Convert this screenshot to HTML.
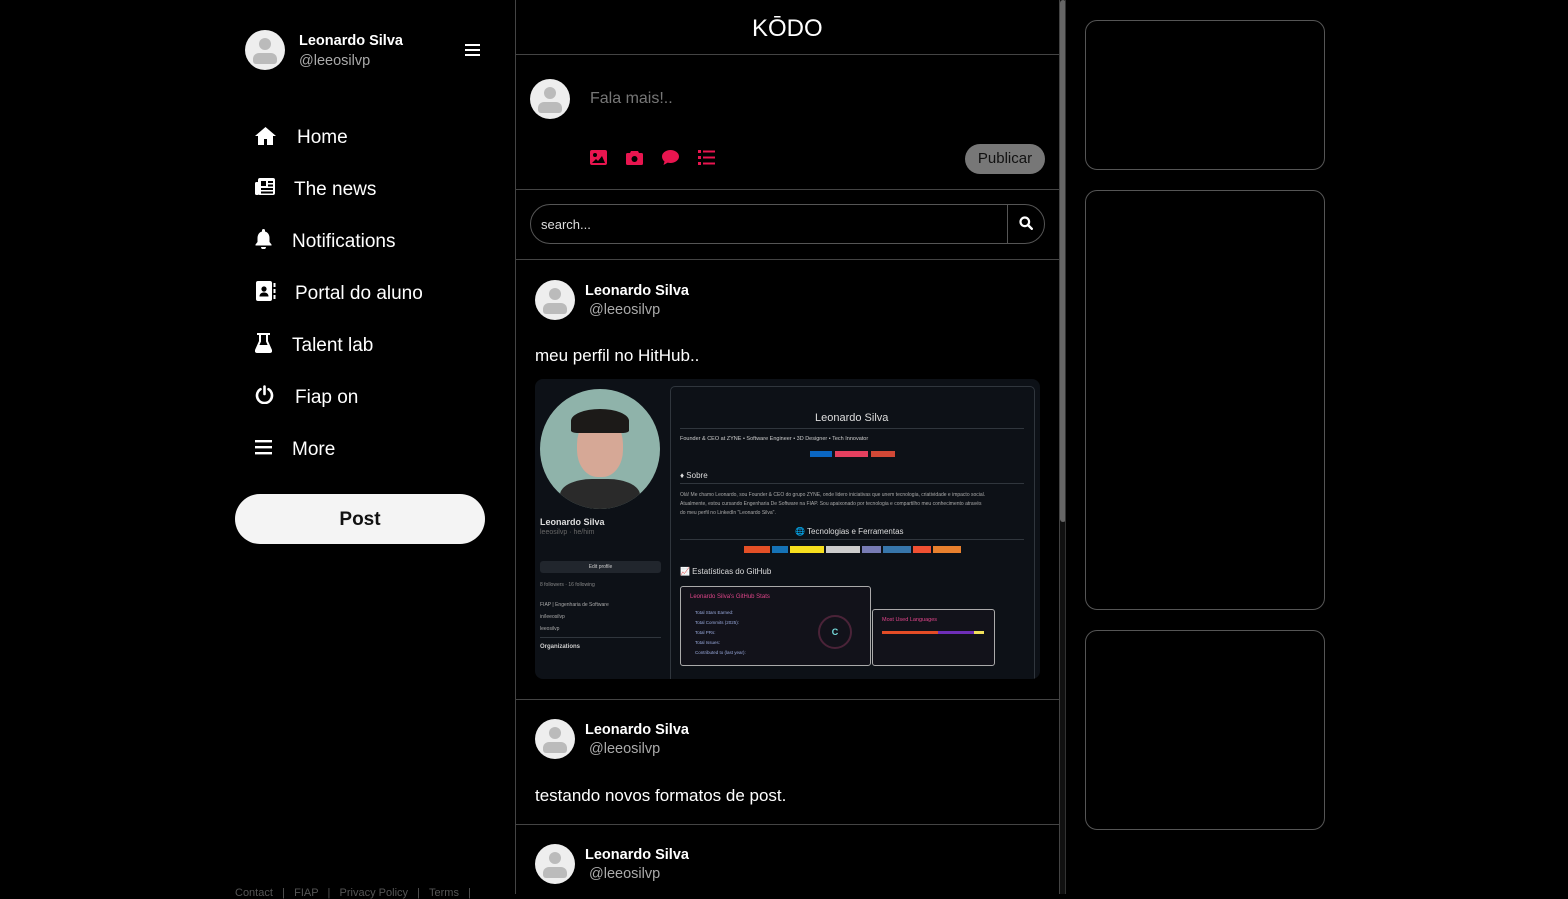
<!DOCTYPE html>
<html><head><meta charset="utf-8"><style>
*{box-sizing:border-box;margin:0;padding:0}
body{width:1568px;height:894px;background:#000;color:#fff;font-family:"Liberation Sans",sans-serif;position:relative;overflow:hidden}
.a{position:absolute}
.av{position:absolute;width:40px;height:40px;border-radius:50%;background:#eee;overflow:hidden}
.av:before{content:"";position:absolute;left:14px;top:8px;width:12px;height:12px;border-radius:50%;background:#bbb}
.av:after{content:"";position:absolute;left:8px;top:23px;width:24px;height:11px;border-radius:6px 6px 3px 3px;background:#bbb}
.hl{position:absolute;left:516px;width:543px;height:1px;background:#444}
.nm{font-weight:bold;font-size:14.5px}
.hd{font-size:14.5px;color:#aaa}
.card{position:absolute;left:1085px;width:240px;border:1px solid #555;border-radius:12px}
.pk{position:absolute;fill:#e8154f}
.t{position:absolute;white-space:nowrap}
</style></head><body>
<div class="av" style="left:245px;top:30px"></div>
<div class="t nm" style="left:299px;top:33px">Leonardo Silva</div>
<div class="t hd" style="left:299px;top:53px">@leeosilvp</div>
<svg class="a" style="left:465px;top:43px" width="15" height="14"><rect y="1" width="15" height="2" fill="#fff"/><rect y="6" width="15" height="2" fill="#fff"/><rect y="11" width="15" height="2" fill="#fff"/></svg>

<svg class="a" style="left:254px;top:126px" width="23" height="20" viewBox="0 0 23 20"><path d="M11.5 1L1 10h3v9h6v-6h3v6h6v-9h3z" fill="#fff"/></svg>
<div class="t" style="left:297px;top:127px;font-size:19px">Home</div>
<svg class="a" style="left:255px;top:178px" width="20" height="18" viewBox="0 0 20 18"><rect x="3" y="0" width="17" height="17" rx="2" fill="#fff"/><rect x="0" y="4" width="4" height="13" rx="1.5" fill="#fff"/><rect x="6" y="3" width="5" height="5" fill="#000"/><rect x="13" y="3" width="5" height="2" fill="#000"/><rect x="13" y="6.5" width="5" height="2" fill="#000"/><rect x="6" y="10" width="12" height="2" fill="#000"/><rect x="6" y="13.5" width="12" height="2" fill="#000"/></svg>
<div class="t" style="left:294px;top:179px;font-size:19px">The news</div>
<svg class="a" style="left:255px;top:229px" width="17" height="20" viewBox="0 0 17 20"><path d="M8.5 0a1.5 1.5 0 0 1 1.5 1.5v1C13 3.3 14.5 6 14.5 9v4l2 2.5v1H.5v-1l2-2.5V9C2.5 6 4 3.3 7 2.5v-1A1.5 1.5 0 0 1 8.5 0zM6 18h5a2.5 2.5 0 0 1-5 0z" fill="#fff"/></svg>
<div class="t" style="left:292px;top:231px;font-size:19px">Notifications</div>
<svg class="a" style="left:256px;top:281px" width="20" height="20" viewBox="0 0 20 20"><rect x="0" y="0" width="16" height="20" rx="2" fill="#fff"/><circle cx="8" cy="8" r="2.6" fill="#000"/><path d="M3.5 15.5c0-2.8 2-4 4.5-4s4.5 1.2 4.5 4z" fill="#000"/><rect x="17.5" y="2" width="2" height="4" fill="#fff"/><rect x="17.5" y="8" width="2" height="4" fill="#fff"/><rect x="17.5" y="14" width="2" height="4" fill="#fff"/></svg>
<div class="t" style="left:295px;top:283px;font-size:19px">Portal do aluno</div>
<svg class="a" style="left:255px;top:333px" width="17" height="20" viewBox="0 0 17 20"><path d="M2 0h13v2h-2v6l4 9c.6 1.5-.3 3-2 3H2C.3 20-.6 18.5 0 17l4-9V2H2z" fill="#fff"/><path d="M6 2h5v6.5l1.6 3.5H4.4L6 8.5z" fill="#000"/></svg>
<div class="t" style="left:292px;top:335px;font-size:19px">Talent lab</div>
<svg class="a" style="left:255px;top:385px" width="19" height="19" viewBox="0 0 19 19"><path d="M5.5 4.2A7.5 7.5 0 1 0 13.5 4.2" stroke="#fff" stroke-width="2.6" fill="none" stroke-linecap="round"/><line x1="9.5" y1="1.5" x2="9.5" y2="9" stroke="#fff" stroke-width="2.6" stroke-linecap="round"/></svg>
<div class="t" style="left:295px;top:387px;font-size:19px">Fiap on</div>
<svg class="a" style="left:255px;top:440px" width="17" height="15"><rect y="0" width="17" height="2.4" fill="#fff"/><rect y="6" width="17" height="2.4" fill="#fff"/><rect y="12" width="17" height="2.4" fill="#fff"/></svg>
<div class="t" style="left:292px;top:439px;font-size:19px">More</div>
<div class="a" style="left:235px;top:494px;width:250px;height:50px;background:#f4f4f4;border-radius:25px;color:#111;font-size:19px;font-weight:bold;text-align:center;line-height:52px">Post</div>
<div class="t" style="left:235px;top:887px;font-size:11px;color:#555">Contact &nbsp; | &nbsp; FIAP &nbsp; | &nbsp; Privacy Policy &nbsp; | &nbsp; Terms &nbsp; |</div>

<div class="a" style="left:515px;top:0;width:1px;height:894px;background:#444"></div>
<div class="a" style="left:1059px;top:0;width:1px;height:894px;background:#444"></div>
<div class="a" style="left:1060px;top:0;width:6px;height:894px;background:#111"></div>
<div class="a" style="left:1060px;top:0;width:6px;height:522px;background:#666;border-radius:3px"></div>
<div class="a" style="left:1065px;top:0;width:1px;height:894px;background:#333"></div>
<div class="t" style="left:752px;top:15px;font-size:24px;font-weight:300">KŌDO</div>
<div class="hl" style="top:54px"></div>
<div class="av" style="left:530px;top:79px"></div>
<div class="t" style="left:590px;top:90px;font-size:16px;color:#777">Fala mais!..</div>
<svg class="pk" style="left:590px;top:150px" width="17" height="15" viewBox="0 0 17 15"><rect width="17" height="15" rx="2"/><circle cx="5" cy="5" r="2" fill="#000"/><path d="M2 13l4-4 2 2 4-5 3 7z" fill="#000"/></svg>
<svg class="pk" style="left:626px;top:150px" width="17" height="15" viewBox="0 0 17 15"><path d="M5 1h7l1 2h2.5a1.5 1.5 0 0 1 1.5 1.5V13.5A1.5 1.5 0 0 1 15.5 15h-14A1.5 1.5 0 0 1 0 13.5V4.5A1.5 1.5 0 0 1 1.5 3H4z"/><circle cx="8.5" cy="9" r="3" fill="#000"/></svg>
<svg class="pk" style="left:662px;top:150px" width="17" height="15" viewBox="0 0 17 15"><path d="M8.5 0C13 0 17 2.8 17 6.5S13 13 8.5 13c-1 0-2-.1-2.8-.4L1.5 15l1-3.5C1 10.2 0 8.5 0 6.5 0 2.8 4 0 8.5 0z"/></svg>
<svg class="pk" style="left:698px;top:150px" width="17" height="15" viewBox="0 0 17 15"><rect x="0" y="0" width="3" height="3"/><rect x="0" y="6" width="3" height="3"/><rect x="0" y="12" width="3" height="3"/><rect x="5" y="0.5" width="12" height="2"/><rect x="5" y="6.5" width="12" height="2"/><rect x="5" y="12.5" width="12" height="2"/></svg>
<div class="a" style="left:965px;top:144px;width:80px;height:30px;background:#777;border-radius:15px;color:#111;font-size:15px;text-align:center;line-height:30px">Publicar</div>
<div class="hl" style="top:189px"></div>
<div class="a" style="left:530px;top:204px;width:515px;height:40px;border:1px solid #555;border-radius:20px"></div>
<div class="a" style="left:1007px;top:205px;width:1px;height:38px;background:#555"></div>
<div class="t" style="left:541px;top:217px;font-size:13px;color:#ddd">search...</div>
<svg class="a" style="left:1019px;top:216px" width="14" height="14" viewBox="0 0 14 14"><circle cx="5.8" cy="5.8" r="4.3" stroke="#fff" stroke-width="2.2" fill="none"/><line x1="9" y1="9" x2="12.8" y2="12.8" stroke="#fff" stroke-width="2.4" stroke-linecap="round"/></svg>
<div class="hl" style="top:259px"></div>

<div class="av" style="left:535px;top:280px"></div>
<div class="t nm" style="left:585px;top:283px">Leonardo Silva</div>
<div class="t hd" style="left:589px;top:302px">@leeosilvp</div>
<div class="t" style="left:535px;top:346px;font-size:17px">meu perfil no HitHub..</div>
<div class="a" style="left:535px;top:379px;width:505px;height:300px;background:#0d1117;border-radius:8px;overflow:hidden">
 <div class="a" style="left:5px;top:10px;width:120px;height:120px;border-radius:50%;background:#8fb3aa;overflow:hidden">
  <div class="a" style="left:37px;top:28px;width:46px;height:60px;border-radius:45%;background:#d6a896"></div>
  <div class="a" style="left:31px;top:20px;width:58px;height:24px;border-radius:50% 50% 10% 10%;background:#1c1a18"></div>
  <div class="a" style="left:20px;top:90px;width:80px;height:40px;border-radius:40% 40% 0 0;background:#2a2a2a"></div>
 </div>
 <div class="t" style="left:5px;top:138px;font-size:9px;font-weight:bold;color:#ddd">Leonardo Silva</div>
 <div class="t" style="left:5px;top:150px;font-size:7px;color:#666">leeosilvp · he/him</div>
 <div class="a" style="left:5px;top:182px;width:121px;height:12px;background:#21262d;border-radius:3px;font-size:5px;text-align:center;line-height:12px;color:#ccc">Edit profile</div>
 <div class="t" style="left:5px;top:203px;font-size:5px;color:#888">8 followers · 16 following</div>
 <div class="t" style="left:5px;top:220px;font-size:5px;color:#aaa;line-height:12px">FIAP | Engenharia de Software<br>in/leeosilvp<br>leeosilvp</div>
 <div class="a" style="left:5px;top:258px;width:121px;height:1px;background:#30363d"></div>
 <div class="t" style="left:5px;top:265px;font-size:6px;font-weight:bold;color:#ccc">Organizations</div>
 <div class="a" style="left:135px;top:7px;width:365px;height:300px;border:1px solid #30363d;border-radius:5px"></div>
 <div class="t" style="left:280px;top:33px;font-size:11px;color:#ddd">Leonardo Silva</div>
 <div class="a" style="left:145px;top:49px;width:344px;height:1px;background:#30363d"></div>
 <div class="t" style="left:145px;top:57px;font-size:5.5px;color:#ccc">Founder &amp; CEO at ZYNE • Software Engineer • 3D Designer • Tech Innovator</div>
 <div class="a" style="left:275px;top:72px;width:22px;height:6px;background:#0a66c2"></div>
 <div class="a" style="left:300px;top:72px;width:33px;height:6px;background:#e4405f"></div>
 <div class="a" style="left:336px;top:72px;width:24px;height:6px;background:#d14836"></div>
 <div class="t" style="left:145px;top:92px;font-size:8px;color:#ddd">♦ Sobre</div>
 <div class="a" style="left:145px;top:104px;width:344px;height:1px;background:#30363d"></div>
 <div class="t" style="left:145px;top:112px;font-size:5px;color:#aaa;line-height:9px">Olá! Me chamo Leonardo, sou Founder &amp; CEO do grupo ZYNE, onde lidero iniciativas que unem tecnologia, criatividade e impacto social.<br>Atualmente, estou cursando Engenharia De Software na FIAP. Sou apaixonado por tecnologia e compartilho meu conhecimento através<br>do meu perfil no LinkedIn "Leonardo Silva".</div>
 <div class="t" style="left:260px;top:148px;font-size:8px;color:#ddd">🌐 Tecnologias e Ferramentas</div>
 <div class="a" style="left:145px;top:160px;width:344px;height:1px;background:#30363d"></div>
 <div class="a" style="left:209px;top:167px;width:26px;height:7px;background:#e34f26"></div>
 <div class="a" style="left:237px;top:167px;width:16px;height:7px;background:#1572b6"></div>
 <div class="a" style="left:255px;top:167px;width:34px;height:7px;background:#f7df1e"></div>
 <div class="a" style="left:291px;top:167px;width:34px;height:7px;background:#ccc"></div>
 <div class="a" style="left:327px;top:167px;width:19px;height:7px;background:#777bb4"></div>
 <div class="a" style="left:348px;top:167px;width:28px;height:7px;background:#3776ab"></div>
 <div class="a" style="left:378px;top:167px;width:18px;height:7px;background:#f05032"></div>
 <div class="a" style="left:398px;top:167px;width:28px;height:7px;background:#e8802e"></div>
 <div class="t" style="left:145px;top:188px;font-size:8px;color:#ddd">📈 Estatísticas do GitHub</div>
 <div class="a" style="left:145px;top:207px;width:191px;height:80px;border:1px solid #aaa;border-radius:3px;background:#12121a"></div>
 <div class="t" style="left:155px;top:215px;font-size:6px;color:#e0458a">Leonardo Silva's GitHub Stats</div>
 <div class="t" style="left:160px;top:229px;font-size:4.5px;color:#9ad;line-height:10px">Total Stars Earned:<br>Total Commits (2025):<br>Total PRs:<br>Total Issues:<br>Contributed to (last year):</div>
 <div class="a" style="left:283px;top:236px;width:34px;height:34px;border-radius:50%;border:2px solid #4a2338;color:#7dd;font-size:9px;text-align:center;line-height:30px;font-weight:bold">C</div>
 <div class="a" style="left:337px;top:230px;width:123px;height:57px;border:1px solid #aaa;border-radius:3px;background:#12121a"></div>
 <div class="t" style="left:347px;top:238px;font-size:5.5px;color:#e0458a">Most Used Languages</div>
 <div class="a" style="left:347px;top:252px;width:102px;height:3px;background:linear-gradient(90deg,#e34c26 0 55%,#6e2eb8 55% 90%,#f1e05a 90%)"></div>
</div>
<div class="hl" style="top:699px"></div>

<div class="av" style="left:535px;top:719px"></div>
<div class="t nm" style="left:585px;top:722px">Leonardo Silva</div>
<div class="t hd" style="left:589px;top:741px">@leeosilvp</div>
<div class="t" style="left:535px;top:786px;font-size:17px">testando novos formatos de post.</div>
<div class="hl" style="top:824px"></div>
<div class="av" style="left:535px;top:844px"></div>
<div class="t nm" style="left:585px;top:847px">Leonardo Silva</div>
<div class="t hd" style="left:589px;top:866px">@leeosilvp</div>

<div class="card" style="top:20px;height:150px"></div>
<div class="card" style="top:190px;height:420px"></div>
<div class="card" style="top:630px;height:200px"></div>
</body></html>
